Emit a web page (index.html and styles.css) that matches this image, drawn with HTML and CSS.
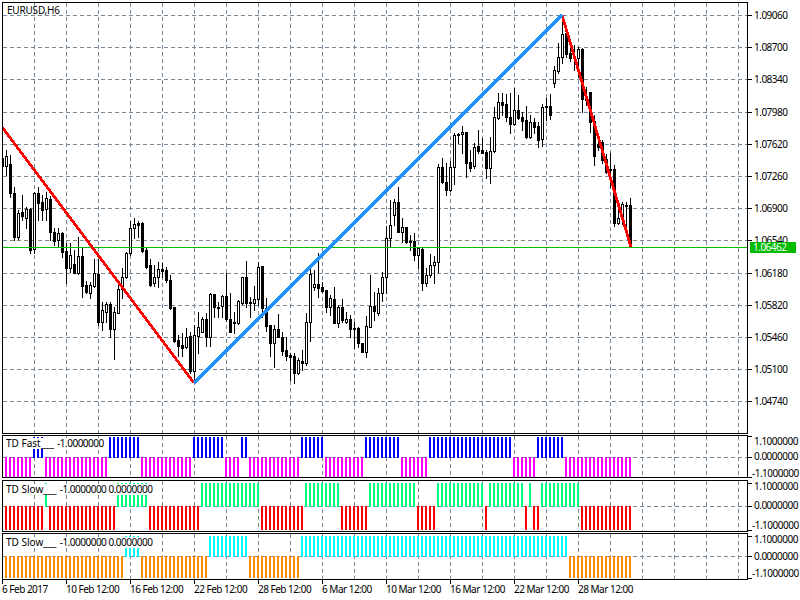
FILE: index.html
```html
<!DOCTYPE html>
<html lang="en">
<head>
    <meta charset="UTF-8">
    <title>EURUSD,H6</title>
    <link rel="stylesheet" href="styles.css">
</head>
<body>
    <div class="terminal">
        <!-- price chart -->
        <div class="pane pane-main">
            <div class="plot">
                <svg id="plot-main" class="plot-svg"></svg>
                <span class="symbol">EURUSD,H6</span>
            </div>
            <div class="scale" id="scale-main">
                <span class="bid-tag">1.06462</span>
            </div>
        </div>

        <!-- indicator windows -->
        <div class="pane pane-fast">
            <div class="plot">
                <svg id="plot-fast" class="plot-svg"></svg>
                <span class="legend"><span class="legend-name">TD Fast___</span> -1.0000000</span>
            </div>
            <div class="scale" id="scale-fast"></div>
        </div>
        <div class="pane pane-slow">
            <div class="plot">
                <svg id="plot-slow" class="plot-svg"></svg>
                <span class="legend"><span class="legend-name">TD Slow___</span> -1.0000000 0.0000000</span>
            </div>
            <div class="scale" id="scale-slow"></div>
        </div>
        <div class="pane pane-signal">
            <div class="plot">
                <svg id="plot-signal" class="plot-svg"></svg>
                <span class="legend"><span class="legend-name">TD Slow___</span> -1.0000000 0.0000000</span>
            </div>
            <div class="scale" id="scale-signal"></div>
        </div>

        <!-- time axis -->
        <div class="time-scale">
            <span class="time-label">6 Feb 2017</span>
            <span class="time-label">10 Feb 12:00</span>
            <span class="time-label">16 Feb 12:00</span>
            <span class="time-label">22 Feb 12:00</span>
            <span class="time-label">28 Feb 12:00</span>
            <span class="time-label">6 Mar 12:00</span>
            <span class="time-label">10 Mar 12:00</span>
            <span class="time-label">16 Mar 12:00</span>
            <span class="time-label">22 Mar 12:00</span>
            <span class="time-label">28 Mar 12:00</span>
        </div>
    </div>
    <script src="chart.js"></script>
</body>
</html>
```

FILE: styles.css
```css
* {
    margin: 0;
    padding: 0;
    box-sizing: border-box;
}

body {
    background: #ffffff;
    color: #000000;
    font-family: "Noto Sans", sans-serif;
    font-size: 10px;
    letter-spacing: -0.5px;
    line-height: 10px;
    overflow: hidden;
}

.terminal {
    width: 800px;
    height: 600px;
    padding: 2px 0 0 2px;
    overflow: hidden;
}

/* one chart window plus its price scale */
.pane {
    display: flex;
}

.pane-main {
    height: 432px;
}

.pane-fast {
    height: 43px;
    margin-top: 1px;
}

.pane-slow {
    height: 52px;
    margin-top: 2px;
}

.pane-signal {
    height: 47px;
    margin-top: 1px;
}

.plot {
    position: relative;
    flex: 0 0 746px;
    border: 1px solid #000000;
}

.plot-svg {
    display: block;
    width: 744px;
    height: 100%;
}

.symbol {
    position: absolute;
    left: 4px;
    top: 2px;
    letter-spacing: -0.2px;
}

/* the legend blanks out the bars behind it */
.legend {
    position: absolute;
    left: 2px;
    background: #ffffff;
    padding: 0 1px;
    height: 11px;
    line-height: 11px;
    white-space: nowrap;
}

.legend-name {
    letter-spacing: 0;
    margin-right: 1px;
}

.pane-fast .legend {
    top: 2px;
}

.pane-slow .legend {
    top: 3px;
}

.pane-signal .legend {
    top: 3px;
}

/* price scale on the right */
.scale {
    position: relative;
    flex: 1;
}

.scale-tick {
    position: absolute;
    left: 0;
    width: 4px;
    height: 1px;
    background: #000000;
}

.scale-label {
    position: absolute;
    left: 6px;
    white-space: nowrap;
}

.scale-label.neg {
    left: 4px;
}

.bid-tag {
    position: absolute;
    z-index: 1;
    left: 2px;
    top: 240px;
    width: 46px;
    height: 11px;
    padding-left: 3px;
    background: #00bb00;
    color: #ffffff;
    line-height: 11px;
}

/* time scale under the last window */
.time-scale {
    display: flex;
}

.time-label {
    flex: 0 0 64px;
    white-space: nowrap;
}

.time-label::before {
    content: "";
    display: block;
    width: 1px;
    height: 4px;
    background: #000000;
}
```

FILE: chart.js
```js
var NS = "http://www.w3.org/2000/svg";
var GRID = "#778899";

// high, low, body top, body bottom (pixel rows), b = black candle, w = white
var candles = [
    [158,166,158,166,"b"],[150,175,156,166,"w"],[155,197,164,193,"b"],[187,240,193,237,"b"],
    [210,239,213,237,"w"],[195,220,212,216,"b"],[207,228,209,218,"w"],[208,253,209,250,"b"],
    [192,253,193,249,"w"],[187,220,193,203,"b"],[195,220,202,210,"b"],[192,220,198,209,"w"],
    [196,240,199,232,"b"],[228,245,232,241,"b"],[228,246,233,240,"w"],[232,257,233,252,"b"],
    [243,283,251,268,"b"],[243,272,255,268,"w"],[250,273,264,273,"b"],[237,274,256,273,"w"],
    [247,297,256,286,"b"],[281,293,285,292,"b"],[282,298,285,293,"w"],[259,287,273,286,"w"],
    [259,325,274,322,"b"],[302,330,310,322,"w"],[302,322,304,312,"w"],[302,337,304,329,"b"],
    [307,359,312,329,"w"],[283,313,289,313,"w"],[268,298,277,289,"w"],[252,278,253,277,"w"],
    [221,255,228,253,"w"],[218,238,224,228,"w"],[221,237,223,225,"b"],[222,252,223,251,"b"],
    [248,268,250,267,"b"],[259,286,265,285,"b"],[265,286,277,283,"w"],[262,287,269,277,"w"],
    [263,277,269,271,"b"],[267,282,270,280,"b"],[275,309,280,308,"b"],[307,342,307,341,"b"],
    [335,356,340,346,"b"],[333,356,345,348,"b"],[328,348,337,347,"w"],[332,373,336,371,"b"],
    [325,382,335,371,"w"],[312,353,327,336,"w"],[317,332,319,332,"w"],[313,346,319,337,"b"],
    [293,346,294,337,"w"],[294,317,294,307,"b"],[302,317,307,308,"w"],[295,317,296,306,"w"],
    [273,321,296,319,"b"],[293,332,319,332,"b"],[312,333,322,323,"b"],[300,324,301,323,"w"],
    [277,304,277,303,"w"],[261,307,277,303,"b"],[297,317,302,303,"b"],[286,310,299,303,"w"],
    [262,305,267,299,"w"],[266,317,266,308,"b"],[298,331,308,326,"b"],[325,356,325,343,"b"],
    [325,367,329,343,"w"],[314,337,329,337,"b"],[332,355,337,351,"b"],[337,360,350,356,"b"],
    [353,380,355,357,"b"],[353,383,356,373,"b"],[358,374,360,373,"w"],[350,370,361,363,"b"],
    [313,365,322,363,"w"],[268,341,274,322,"w"],[270,290,284,287,"w"],[253,297,284,288,"b"],
    [282,292,287,291,"b"],[290,312,290,307,"b"],[295,315,298,307,"w"],[287,323,299,323,"b"],
    [305,327,307,323,"w"],[299,322,307,320,"b"],[312,323,319,322,"w"],[315,337,319,329,"b"],
    [322,348,328,329,"b"],[327,347,328,343,"b"],[343,352,343,352,"b"],[316,357,326,352,"w"],
    [275,327,306,327,"w"],[292,320,306,311,"b"],[288,315,293,313,"w"],[272,301,277,293,"w"],
    [226,293,238,277,"w"],[200,247,225,238,"w"],[199,225,202,215,"w"],[187,232,202,232,"b"],
    [218,242,227,232,"w"],[227,243,227,242,"b"],[235,250,241,242,"b"],[233,260,241,255,"b"],
    [247,268,248,255,"w"],[248,290,249,283,"b"],[268,286,275,283,"w"],[254,277,265,275,"w"],
    [256,283,262,265,"w"],[164,272,167,262,"w"],[158,183,167,182,"b"],[163,195,182,190,"b"],
    [161,191,167,190,"w"],[133,184,135,167,"w"],[133,143,134,135,"b"],[126,153,132,134,"w"],
    [132,177,132,163,"b"],[150,171,162,168,"b"],[143,168,147,166,"w"],[130,153,146,151,"b"],
    [138,153,150,153,"b"],[150,178,152,168,"b"],[137,183,151,168,"w"],[107,152,117,151,"w"],
    [93,119,102,118,"w"],[93,115,102,105,"b"],[94,121,104,117,"b"],[93,133,117,124,"b"],
    [88,125,110,124,"w"],[95,119,110,118,"b"],[112,130,117,121,"b"],[106,138,120,137,"b"],
    [115,138,122,137,"w"],[118,133,122,127,"b"],[122,147,126,140,"b"],[104,146,107,139,"w"],
    [98,120,106,107,"b"],[94,119,106,115,"b"],[66,87,70,83,"w"],[43,73,57,71,"w"],
    [16,63,34,57,"w"],[33,57,33,54,"b"],[40,61,53,58,"b"],[45,70,57,58,"b"],
    [47,77,49,58,"w"],[48,112,49,99,"b"],[87,105,99,100,"b"],[92,132,92,122,"b"],
    [115,165,121,156,"b"],[135,150,144,147,"b"],[140,163,142,160,"b"],[154,173,159,172,"b"],
    [153,187,169,170,"b"],[165,226,169,223,"b"],[202,224,218,223,"w"],[202,224,204,218,"w"],
    [202,227,205,206,"b"],[198,247,205,247,"b"]
];

// runs of bars: first candle, last candle, direction (1 = above the zero line)
var fastBars = [[1,7,0],[8,10,1],[11,26,0],[27,34,1],[35,47,0],[48,55,1],[56,59,0],[60,61,1],
    [62,74,0],[75,80,1],[81,90,0],[91,99,1],[100,106,0],[107,127,1],[128,133,0],[134,140,1],[141,157,0]];
var slowBars = [[1,10,0],[11,11,1],[12,28,0],[29,36,1],[37,49,0],[50,64,1],[65,75,0],[76,84,1],
    [85,91,0],[92,103,1],[104,108,0],[109,120,1],[121,121,0],[122,130,1],[131,131,0],[132,132,1],
    [133,134,0],[135,144,1],[145,157,0]];
var signalBars = [[1,30,0],[31,34,1],[35,51,0],[52,61,1],[62,74,0],[75,141,1],[142,157,0]];

function el(parent, name, attrs) {
    var node = document.createElementNS(NS, name);
    for (var key in attrs) node.setAttribute(key, attrs[key]);
    parent.appendChild(node);
    return node;
}

function rect(svg, x, y, w, h, fill) {
    el(svg, "rect", { x: x, y: y, width: w, height: h, fill: fill, "shape-rendering": "crispEdges" });
}

// svg coordinates are page pixels, so everything below reads straight off the screen
function setupPlot(id, top, bottom) {
    var svg = document.getElementById(id);
    svg.setAttribute("viewBox", "3 " + top + " 744 " + (bottom - top));
    for (var x = 34; x < 747; x += 32) gridLine(svg, x, top, x, bottom);
    return svg;
}

function gridLine(svg, x1, y1, x2, y2) {
    el(svg, "line", {
        x1: x1 + (x1 === x2 ? 0.5 : 0), y1: y1 + (y1 === y2 ? 0.5 : 0),
        x2: x2 + (x1 === x2 ? 0.5 : 0), y2: y2 + (y1 === y2 ? 0.5 : 0),
        stroke: GRID, "stroke-dasharray": "4 3", "shape-rendering": "crispEdges"
    });
}

function addScaleRow(id, paneTop, tickY, text, labelY) {
    var scale = document.getElementById(id);
    var tick = document.createElement("span");
    tick.className = "scale-tick";
    tick.style.top = (tickY - paneTop) + "px";
    scale.appendChild(tick);
    var label = document.createElement("span");
    label.className = "scale-label" + (text.charAt(0) === "-" ? " neg" : "");
    label.style.top = (labelY - paneTop - 5) + "px";
    label.textContent = text;
    scale.appendChild(label);
}

function drawMain() {
    var svg = setupPlot("plot-main", 3, 433);
    var prices = ["1.09060","1.08700","1.08340","1.07980","1.07620","1.07260","1.06900",
        "1.06540","1.06180","1.05820","1.05460","1.05100","1.04740"];
    var rows = [15,47,79,112,144,176,208,240,273,305,337,369,401];
    rows.forEach(function (y, i) {
        gridLine(svg, 3, y, 747, y);
        addScaleRow("scale-main", 2, y, prices[i], y);
    });

    candles.forEach(function (c, k) {
        var x = 4 * k + 1;
        rect(svg, x + 1, c[0], 1, c[1] - c[0] + 1, "#000000");
        rect(svg, x, c[2], 3, c[3] - c[2] + 1, "#000000");
        if (c[4] === "w" && c[3] - c[2] > 1) rect(svg, x + 1, c[2] + 1, 1, c[3] - c[2] - 1, "#ffffff");
    });

    rect(svg, 3, 247, 744, 1, "#00bb00");

    var wave = { fill: "none", "stroke-width": 2.8, "shape-rendering": "crispEdges" };
    wave.stroke = "#ff0000";
    wave.points = "2,127 194,383";
    el(svg, "polyline", wave);
    wave.points = "562,15 631,247";
    el(svg, "polyline", wave);
    wave.stroke = "#1e90ff";
    wave["stroke-width"] = 2.9;
    wave.points = "194,383 562,15";
    el(svg, "polyline", wave);
}

function drawBars(id, top, bottom, upTop, zero, downBottom, runs, upColor, downColor) {
    var svg = setupPlot(id, top, bottom);
    gridLine(svg, 3, zero, 747, zero);
    runs.forEach(function (run) {
        for (var k = run[0]; k <= run[1]; k++) {
            var x = 4 * k + 1;
            if (run[2]) rect(svg, x, upTop, 2, zero - upTop + 1, upColor);
            else rect(svg, x, zero, 2, downBottom - zero + 1, downColor);
        }
    });
}

function scaleRows(id, paneTop, ticks, labels) {
    var texts = ["1.1000000", "0.0000000", "-1.1000000"];
    texts.forEach(function (text, i) {
        addScaleRow(id, paneTop, ticks[i], text, labels[i]);
    });
}

drawMain();

drawBars("plot-fast", 436, 477, 437, 457, 477, fastBars, "#0000ff", "#ff00ff");
drawBars("plot-slow", 481, 531, 483, 506, 529, slowBars, "#00ff7f", "#ff0000");
drawBars("plot-signal", 534, 579, 536, 556, 577, signalBars, "#00ffff", "#ff8c00");

scaleRows("scale-fast", 435, [436, 457, 477], [441, 456, 473]);
scaleRows("scale-slow", 480, [483, 506, 530], [486, 505, 525]);
scaleRows("scale-signal", 533, [536, 556, 578], [539, 556, 573]);
```
